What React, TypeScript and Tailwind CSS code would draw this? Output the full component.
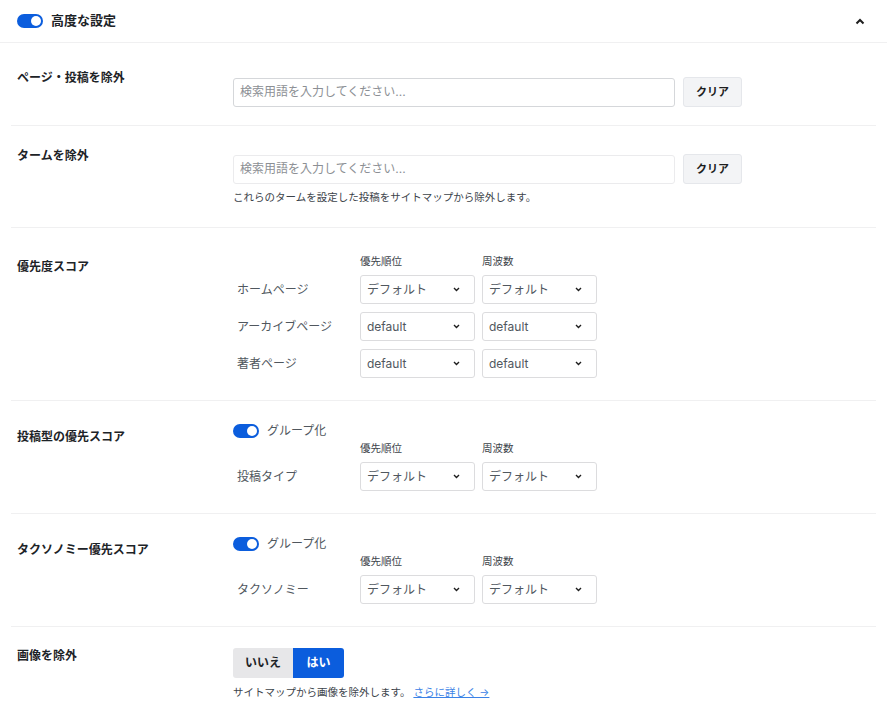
import React from 'react';

const font = { fontFamily: 'Inter, "Noto Sans CJK JP", sans-serif' };

function Toggle() {
  return (
    <span className="flex h-[14px] w-[26px] shrink-0 items-center rounded-full bg-[#0b5ddd] px-[2px]">
      <span className="ml-auto h-[10px] w-[10px] rounded-full bg-white" />
    </span>
  );
}

function Select({ value }: { value: string }) {
  return (
    <div className="flex h-[29px] w-[115px] items-center justify-between rounded-[3px] border border-[#dcdcde] bg-white pl-[6px] pr-[14px] text-[12px] text-[#50575e]">
      <span>{value}</span>
      <svg width="7" height="5" viewBox="0 0 7 5" fill="none" stroke="#1e1e1e" strokeWidth="1.4">
        <polyline points="1 1 3.5 3.5 6 1" />
      </svg>
    </div>
  );
}

function PriorityGrid({ rows }: { rows: { label: string; a: string; b: string }[] }) {
  return (
    <div className="flex flex-col">
      <div className="mb-[6px] grid grid-cols-[120px_115px_115px] gap-x-[7px] text-[10.5px] leading-[14px] text-[#3c434a]">
        <span />
        <span>優先順位</span>
        <span>周波数</span>
      </div>
      <div className="flex flex-col gap-[8px]">
        {rows.map((r) => (
          <div key={r.label} className="grid grid-cols-[120px_115px_115px] items-center gap-x-[7px]">
            <span className="pl-1 text-[12px] text-[#50575e]">{r.label}</span>
            <Select value={r.a} />
            <Select value={r.b} />
          </div>
        ))}
      </div>
    </div>
  );
}

function SearchRow({ border }: { border: string }) {
  return (
    <div className="flex items-center gap-[8px]">
      <div
        className={`flex h-[29px] w-[442px] items-center rounded-[3px] border bg-white px-[6px] text-[12px] text-[#8c8f94] ${border}`}
      >
        検索用語を入力してください...
      </div>
      <button className="h-[30px] w-[59px] rounded-[3px] border border-[#e5e7eb] bg-[#f3f4f6] text-[11px] font-bold text-[#1e1e1e]">
        クリア
      </button>
    </div>
  );
}

const label = 'w-[216px] shrink-0 text-[12px] font-bold leading-[16px] text-[#1d2327]';

export default function App() {
  return (
    <div className="min-h-screen w-full bg-white" style={font}>
      {/* Header */}
      <div className="flex h-[43px] items-center border-b border-[#f0f0f1] pl-[17px] pr-[22px]">
        <Toggle />
        <span className="ml-[8px] text-[13px] font-bold text-[#1d2327]">高度な設定</span>
        <svg className="ml-auto" width="10" height="7" viewBox="0 0 10 7" fill="none" stroke="#1e1e1e" strokeWidth="2">
          <polyline points="1.5 5.5 5 2 8.5 5.5" />
        </svg>
      </div>

      <div className="px-[11px]">
        {/* Exclude pages */}
        <div className="flex border-b border-[#f0f0f1] pb-[18px] pl-[6px] pt-[27px]">
          <div className={label}>ページ・投稿を除外</div>
          <div className="mt-[7px]">
            <SearchRow border="border-[#d5d7da]" />
          </div>
        </div>

        {/* Exclude terms */}
        <div className="flex border-b border-[#f0f0f1] pb-[22px] pl-[6px] pt-[22px]">
          <div className={label}>タームを除外</div>
          <div className="mt-[6px]">
            <SearchRow border="border-[#ebebed]" />
            <p className="mt-[7px] text-[10.5px] leading-[14px] text-[#3c434a]">
              これらのタームを設定した投稿をサイトマップから除外します。
            </p>
          </div>
        </div>

        {/* Priority score */}
        <div className="flex border-b border-[#f0f0f1] pb-[22px] pl-[6px] pt-[27px]">
          <div className={`${label} mt-[4px]`}>優先度スコア</div>
          <PriorityGrid
            rows={[
              { label: 'ホームページ', a: 'デフォルト', b: 'デフォルト' },
              { label: 'アーカイブページ', a: 'default', b: 'default' },
              { label: '著者ページ', a: 'default', b: 'default' },
            ]}
          />
        </div>

        {/* Post type priority */}
        <div className="flex border-b border-[#f0f0f1] pb-[22px] pl-[6px] pt-[22px]">
          <div className={`${label} mt-[6px]`}>投稿型の優先スコア</div>
          <div>
            <div className="flex h-[16px] items-center gap-[8px]">
              <Toggle />
              <span className="text-[12px] text-[#50575e]">グループ化</span>
            </div>
            <div className="mt-[3px]">
              <PriorityGrid rows={[{ label: '投稿タイプ', a: 'デフォルト', b: 'デフォルト' }]} />
            </div>
          </div>
        </div>

        {/* Taxonomy priority */}
        <div className="flex border-b border-[#f0f0f1] pb-[22px] pl-[6px] pt-[22px]">
          <div className={`${label} mt-[6px]`}>タクソノミー優先スコア</div>
          <div>
            <div className="flex h-[16px] items-center gap-[8px]">
              <Toggle />
              <span className="text-[12px] text-[#50575e]">グループ化</span>
            </div>
            <div className="mt-[3px]">
              <PriorityGrid rows={[{ label: 'タクソノミー', a: 'デフォルト', b: 'デフォルト' }]} />
            </div>
          </div>
        </div>

        {/* Exclude images */}
        <div className="flex pb-[20px] pl-[6px] pt-[21px]">
          <div className={label}>画像を除外</div>
          <div>
            <div className="flex h-[30px]">
              <button className="w-[60px] rounded-l-[3px] bg-[#e7e7e9] text-[12px] font-bold text-[#1d2327]">
                いいえ
              </button>
              <button className="w-[51px] rounded-r-[3px] bg-[#0b5ddd] text-[12px] font-bold text-white">
                はい
              </button>
            </div>
            <p className="mt-[8px] text-[10.5px] leading-[14px] text-[#3c434a]">
              サイトマップから画像を除外します。{' '}
              <a className="text-[#3b82e6] underline">さらに詳しく →</a>
            </p>
          </div>
        </div>
      </div>
    </div>
  );
}
